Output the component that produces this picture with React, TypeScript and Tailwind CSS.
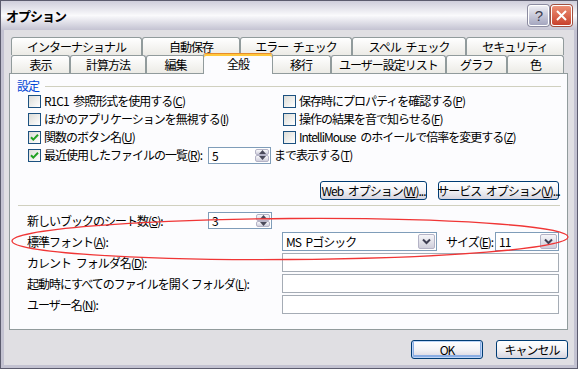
import React from "react";

const tabsTop = [
  { label: "インターナショナル", w: "w-[131px]" },
  { label: "自動保存", w: "w-[98px]" },
  { label: "エラー チェック", w: "w-[112px]" },
  { label: "スペル チェック", w: "w-[114px]" },
  { label: "セキュリティ", w: "w-[98px]" },
];

const tabsBottom = [
  { label: "表示", w: "w-[59px]" },
  { label: "計算方法", w: "w-[76px]" },
  { label: "編集", w: "w-[59px]" },
  { label: "全般", w: "w-[70px]", active: true },
  { label: "移行", w: "w-[60px]" },
  { label: "ユーザー設定リスト", w: "w-[115px]" },
  { label: "グラフ", w: "w-[61px]" },
  { label: "色", w: "w-[57px]" },
];

function Tab({ label, w, active }: { label: string; w: string; active?: boolean }) {
  if (active) {
    return (
      <div
        className={`${w} -mx-[2px] h-[21px] -mb-px relative z-10 flex justify-center pt-[2px] rounded-t-[3px] border border-b-0 border-[#919b9c] border-t-[#e68b2c] bg-[#fcfcfe] shadow-[inset_0_2px_0_#ffc83c]`}
      >
        <span className="leading-[16px]">{label}</span>
      </div>
    );
  }
  return (
    <div
      className={`${w} h-[18px] flex items-center justify-center rounded-t-[3px] border border-b-0 border-[#919b9c] bg-linear-to-b from-white to-[#ecebe6]`}
    >
      <span className="leading-none">{label}</span>
    </div>
  );
}

function Check({ checked }: { checked?: boolean }) {
  return (
    <span className="w-[13px] h-[13px] shrink-0 flex items-center justify-center border border-[#1c5180] bg-linear-to-br from-[#dcdcd7] to-white">
      {checked && (
        <svg width="9" height="9" viewBox="0 0 9 9">
          <path d="M1 4.2 L3.3 6.6 L8 1.8" stroke="#21a121" strokeWidth="2" fill="none" />
        </svg>
      )}
    </span>
  );
}

function CheckRow({ checked, children }: { checked?: boolean; children: React.ReactNode }) {
  return (
    <div className="h-[18px] flex items-center gap-[3px]">
      <Check checked={checked} />
      <span className="leading-none whitespace-nowrap">{children}</span>
    </div>
  );
}

function SpinBtn({ up }: { up?: boolean }) {
  return (
    <div className="flex-1 flex items-center justify-center rounded-[2px] border border-[#b4b3c6] bg-linear-to-b from-[#fafafc] to-[#cfcedb]">
      <svg width="7" height="4" viewBox="0 0 7 4">
        <path d={up ? "M0 4 L3.5 0 L7 4 Z" : "M0 0 L3.5 4 L7 0 Z"} fill="#4a4a5a" />
      </svg>
    </div>
  );
}

function Spin({ value, w }: { value: string; w: string }) {
  return (
    <div className={`${w} h-[17px] shrink-0 flex border border-[#7f9db9] bg-white`}>
      <span className="flex-1 pl-[3px] leading-[15px]">{value}</span>
      <div className="w-[15px] flex flex-col py-px pr-px">
        <SpinBtn up />
        <SpinBtn />
      </div>
    </div>
  );
}

function Combo({ value, w }: { value: string; w: string }) {
  return (
    <div className={`${w} h-[19px] shrink-0 flex items-center border border-[#7f9db9] bg-white`}>
      <span className="flex-1 pl-[3px] leading-none">{value}</span>
      <div className="w-[17px] h-[15px] mr-px flex items-center justify-center rounded-[2px] border border-[#b4b3c6] bg-linear-to-b from-[#f6f6f9] to-[#cfcedb]">
        <svg width="9" height="7" viewBox="0 0 9 7">
          <path d="M1 1.5 L4.5 5 L8 1.5" stroke="#3e3e52" strokeWidth="2" fill="none" />
        </svg>
      </div>
    </div>
  );
}

function Field() {
  return <div className="w-[277px] h-[19px] shrink-0 border border-[#a5acb5] bg-white" />;
}

function Button({ children, w, def }: { children: React.ReactNode; w: string; def?: boolean }) {
  return (
    <div
      className={`${w} h-[19px] flex items-center justify-center rounded-[3px] border border-[#003c74] bg-linear-to-b from-white via-[#f3f3f6] to-[#d5d4df] ${
        def ? "shadow-[inset_0_0_0_1px_#bcd4f6,inset_0_-1px_0_2px_#89ade4]" : ""
      }`}
    >
      <span className="leading-none whitespace-nowrap">{children}</span>
    </div>
  );
}

export default function App() {
  return (
    <div className="w-[578px] h-[369px] relative overflow-hidden flex flex-col border border-[#5c5c6e] bg-[#e0dfe3] text-[12px] tracking-[-1px] [word-spacing:3px] text-black font-['Noto_Sans_CJK_JP','Noto_Sans',sans-serif]">
      {/* Title bar */}
      <div className="h-[29px] shrink-0 flex items-center pl-[5px] pr-[5px] bg-linear-to-b from-[#cfcedb] via-[#fafafc] to-[#c4c3d2]">
        <span className="font-bold text-[13px] leading-none flex-1">オプション</span>
        <div className="w-[21px] h-[21px] flex items-center justify-center rounded-[3px] border border-white bg-linear-to-b from-[#eeeef4] to-[#a4a6bf] shadow-[0_0_0_1px_#8c8ca0]">
          <span className="text-[15px] leading-none text-[#3c3c4c] font-['Liberation_Sans',sans-serif]">?</span>
        </div>
        <div className="w-[21px] h-[21px] ml-[2px] flex items-center justify-center rounded-[3px] border border-white bg-linear-to-b from-[#ec8e74] to-[#c8402c] shadow-[0_0_0_1px_#a05040]">
          <svg width="11" height="11" viewBox="0 0 11 11">
            <path d="M1 1 L10 10 M10 1 L1 10" stroke="white" strokeWidth="2" />
          </svg>
        </div>
      </div>

      {/* Client area */}
      <div className="flex-1 flex flex-col pt-[7px] border-x-[3px] border-b-[3px] border-[#c3c2d1]">
        <div className="flex ml-[7px]">
          {tabsTop.map((t) => (
            <Tab key={t.label} {...t} />
          ))}
        </div>
        <div className="flex items-end h-[18px] ml-[7px]">
          {tabsBottom.map((t) => (
            <Tab key={t.label} {...t} />
          ))}
        </div>

        <div className="ml-[5px] w-[559px] h-[257px] border border-[#919b9c] bg-[#fcfcfe] flex flex-col pt-[6px]">
          <div className="h-[12px] flex items-center pl-[7px]">
            <span className="text-[#0046d5] leading-none">設定</span>
            <div className="flex-1 h-px bg-[#d0d0bf] ml-[6px] mr-[6px]" />
          </div>

          <div className="pl-[18px] grid grid-cols-[255px_1fr]">
            <div className="flex flex-col">
              <CheckRow>R1C1 参照形式を使用する(<u>C</u>)</CheckRow>
              <CheckRow>ほかのアプリケーションを無視する(<u>I</u>)</CheckRow>
              <CheckRow checked>関数のボタン名(<u>U</u>)</CheckRow>
            </div>
            <div className="flex flex-col">
              <CheckRow>保存時にプロパティを確認する(<u>P</u>)</CheckRow>
              <CheckRow>操作の結果を音で知らせる(<u>F</u>)</CheckRow>
              <CheckRow>IntelliMouse のホイールで倍率を変更する(<u>Z</u>)</CheckRow>
            </div>
          </div>
          <div className="pl-[18px] h-[18px] flex items-center">
            <Check checked />
            <span className="w-[167px] pl-[3px] leading-none whitespace-nowrap">
              最近使用したファイルの一覧(<u>R</u>):
            </span>
            <Spin value="5" w="w-[63px]" />
            <span className="pl-[3px] leading-none whitespace-nowrap">まで表示する(<u>T</u>)</span>
          </div>

          <div className="mt-[17px] flex justify-end gap-[11px] pr-[8px]">
            <Button w="w-[107px]">
              Web オプション(<u>W</u>)...
            </Button>
            <Button w="w-[121px]">
              サービス オプション(<u>V</u>)...
            </Button>
          </div>

          <div className="mt-[5px] h-px bg-[#d0d0bf] ml-[8px] mr-[7px]" />

          <div className="mt-[5px] pl-[17px] flex flex-col gap-[2px]">
            <div className="h-[19px] flex items-center">
              <span className="w-[181px] leading-none whitespace-nowrap">新しいブックのシート数(<u>S</u>):</span>
              <Spin value="3" w="w-[64px]" />
            </div>
            <div className="h-[19px] flex items-center">
              <span className="w-[255px] leading-none">標準フォント(<u>A</u>):</span>
              <Combo value="MS Pゴシック" w="w-[155px]" />
              <span className="w-[58px] pl-[9px] leading-none whitespace-nowrap">サイズ(<u>E</u>):</span>
              <Combo value="11" w="w-[64px]" />
            </div>
            <div className="h-[19px] flex items-center">
              <span className="w-[255px] leading-none">カレント フォルダ名(<u>D</u>):</span>
              <Field />
            </div>
            <div className="h-[19px] flex items-center">
              <span className="w-[255px] leading-none whitespace-nowrap">
                起動時にすべてのファイルを開くフォルダ(<u>L</u>):
              </span>
              <Field />
            </div>
            <div className="h-[19px] flex items-center">
              <span className="w-[255px] leading-none">ユーザー名(<u>N</u>):</span>
              <Field />
            </div>
          </div>
        </div>

        <div className="mt-[10px] flex justify-end gap-[13px] pr-[6px]">
          <Button w="w-[72px]" def>
            OK
          </Button>
          <Button w="w-[72px]">キャンセル</Button>
        </div>
      </div>

      {/* hand-drawn highlight annotation */}
      <svg className="absolute left-0 top-0 pointer-events-none" width="578" height="369" viewBox="0 0 578 369">
        <ellipse
          cx="289"
          cy="238"
          rx="278"
          ry="20.5"
          fill="none"
          stroke="#f03535"
          strokeWidth="1.3"
          transform="rotate(-0.4 289 238)"
        />
      </svg>
    </div>
  );
}
